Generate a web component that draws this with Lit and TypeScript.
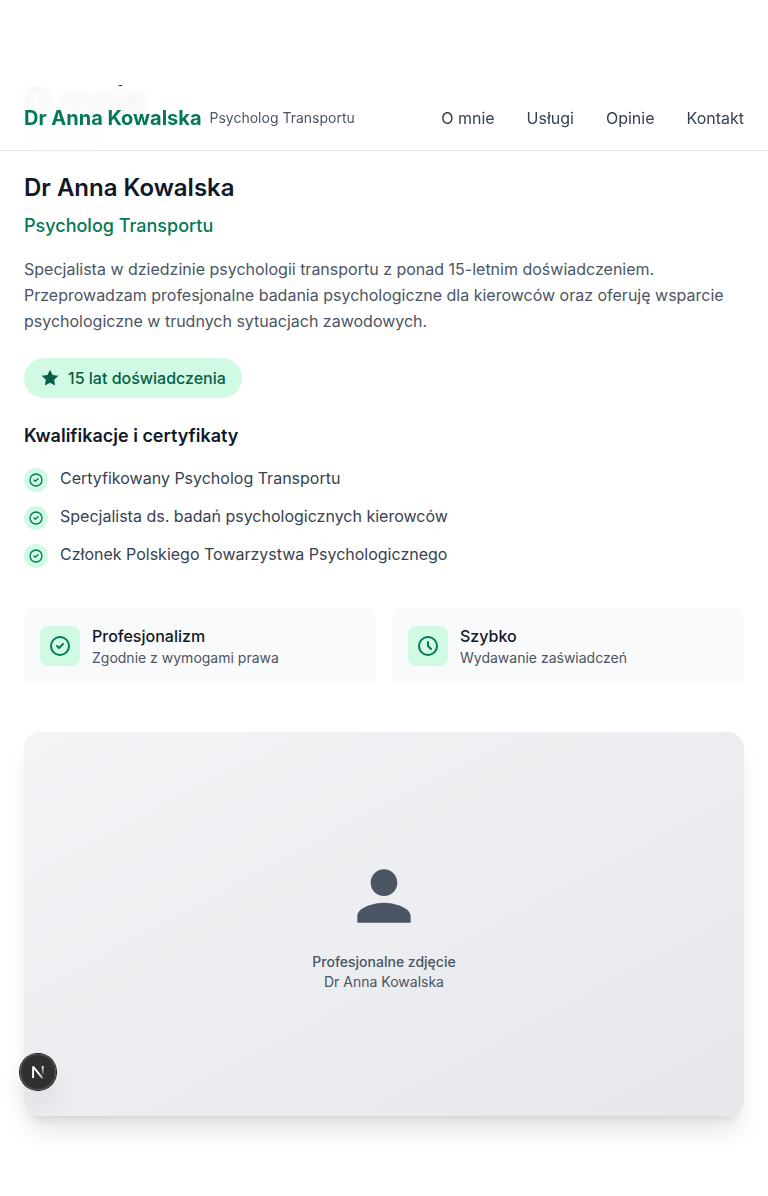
import { LitElement, html, svg, css } from "lit";
import { customElement } from "lit/decorators.js";

const check = svg`<path d="M9 12l2 2 4-4m6 2a9 9 0 11-18 0 9 9 0 0118 0z"/>`;
const clock = svg`<path d="M12 8v4l3 3m6-3a9 9 0 11-18 0 9 9 0 0118 0z"/>`;

const NAV = ["O mnie", "Usługi", "Opinie", "Kontakt"];
const QUALIFICATIONS = [
  "Certyfikowany Psycholog Transportu",
  "Specjalista ds. badań psychologicznych kierowców",
  "Członek Polskiego Towarzystwa Psychologicznego",
];
const FEATURES = [
  { icon: check, title: "Profesjonalizm", text: "Zgodnie z wymogami prawa" },
  { icon: clock, title: "Szybko", text: "Wydawanie zaświadczeń" },
];

@customElement("app-root")
export class AppRoot extends LitElement {
  static styles = css`
    :host {
      display: block;
      position: relative;
      height: 1196px;
      overflow: hidden;
      background: #fff;
      font: 400 16px/24px Inter, sans-serif;
      color: #111827;
    }
    * { box-sizing: border-box; margin: 0; padding: 0; }
    svg { display: block; flex: none; }
    .line { fill: none; stroke: currentColor; stroke-width: 2; stroke-linecap: round; stroke-linejoin: round; }
    header {
      position: absolute;
      top: 86px;
      left: 0;
      right: 0;
      z-index: 2;
      height: 65px;
      padding: 0 24px;
      display: flex;
      align-items: center;
      justify-content: space-between;
      background: rgb(255 255 255 / 0.95);
      backdrop-filter: blur(4px);
      border-bottom: 1px solid #e5e7eb;
    }
    .brand { display: flex; align-items: center; gap: 8px; }
    .name { font-size: 20px; line-height: 28px; font-weight: 700; color: #047857; }
    .role { font-size: 14px; line-height: 20px; color: #4b5563; }
    nav { display: flex; gap: 32px; }
    nav a { color: #374151; }
    main { padding: 80px 24px 0; }
    h2 { font-size: 36px; line-height: 40px; font-weight: 700; color: #111827; }
    .bar { width: 80px; height: 4px; margin: 16px 0 32px; background: #047857; }
    h3 { font-size: 24px; line-height: 32px; font-weight: 600; color: #111827; }
    .sub { margin-top: 8px; font-size: 18px; line-height: 28px; font-weight: 500; color: #047857; }
    .bio { margin-top: 16px; line-height: 26px; color: #4b5563; }
    .badge {
      display: inline-flex;
      align-items: center;
      gap: 8px;
      margin-top: 24px;
      padding: 8px 16px;
      border-radius: 20px;
      background: #d1fae5;
      color: #065f46;
      font-weight: 500;
      vertical-align: top;
    }
    h4 { margin-top: 24px; font-size: 18px; line-height: 28px; font-weight: 600; color: #111827; }
    ul { list-style: none; margin-top: 16px; display: grid; gap: 12px; }
    li { display: flex; align-items: flex-start; gap: 12px; color: #374151; }
    .dot {
      display: grid;
      place-items: center;
      width: 24px;
      height: 24px;
      margin-top: 2px;
      border-radius: 50%;
      background: #d1fae5;
      color: #047857;
    }
    .cards { display: grid; grid-template-columns: 1fr 1fr; gap: 16px; margin-top: 40px; }
    .card {
      display: flex;
      align-items: center;
      gap: 12px;
      padding: 16px;
      border-radius: 8px;
      background: #f9fafb;
    }
    .tile {
      display: grid;
      place-items: center;
      width: 40px;
      height: 40px;
      border-radius: 8px;
      background: #d1fae5;
      color: #047857;
    }
    .title { font-weight: 500; color: #111827; }
    .text { font-size: 14px; line-height: 20px; color: #4b5563; }
    .photo {
      display: flex;
      flex-direction: column;
      align-items: center;
      justify-content: center;
      height: 384px;
      margin-top: 48px;
      border-radius: 16px;
      background: linear-gradient(to bottom right, #f3f4f6, #e5e7eb);
      box-shadow: 0 20px 25px -5px rgb(0 0 0 / 0.1), 0 8px 10px -6px rgb(0 0 0 / 0.1);
      color: #4b5563;
      font-size: 14px;
      line-height: 20px;
    }
    .photo svg { margin-bottom: 16px; }
    .strong { font-weight: 500; }
    .dev {
      position: absolute;
      left: 20px;
      top: 1054px;
      z-index: 3;
      display: grid;
      place-items: center;
      width: 36px;
      height: 36px;
      border-radius: 50%;
      background: rgb(0 0 0 / 0.8);
      box-shadow: 0 0 0 1px #171717, inset 0 0 0 1px hsl(0 0% 100% / 0.14), 0 16px 32px -8px rgb(0 0 0 / 0.24);
    }
  `;

  render() {
    return html`
      <header>
        <div class="brand">
          <span class="name">Dr Anna Kowalska</span>
          <span class="role">Psycholog Transportu</span>
        </div>
        <nav>${NAV.map((n) => html`<a>${n}</a>`)}</nav>
      </header>
      <main>
        <h2>O mnie</h2>
        <div class="bar"></div>
        <h3>Dr Anna Kowalska</h3>
        <p class="sub">Psycholog Transportu</p>
        <p class="bio">
          Specjalista w dziedzinie psychologii transportu z ponad 15-letnim doświadczeniem.
          Przeprowadzam profesjonalne badania psychologiczne dla kierowców oraz oferuję wsparcie
          psychologiczne w trudnych sytuacjach zawodowych.
        </p>
        <div class="badge">
          <svg width="20" height="20" viewBox="0 0 24 24" fill="currentColor">
            <path d="M12 2l3.09 6.26L22 9.27l-5 4.87 1.18 6.88L12 17.77l-6.18 3.25L7 14.14 2 9.27l6.91-1.01L12 2z" />
          </svg>
          <span>15 lat doświadczenia</span>
        </div>
        <h4>Kwalifikacje i certyfikaty</h4>
        <ul>
          ${QUALIFICATIONS.map(
            (q) => html`<li>
              <span class="dot"><svg class="line" width="16" height="16" viewBox="0 0 24 24">${check}</svg></span>
              <span>${q}</span>
            </li>`
          )}
        </ul>
        <div class="cards">
          ${FEATURES.map(
            (f) => html`<div class="card">
              <span class="tile"><svg class="line" width="24" height="24" viewBox="0 0 24 24">${f.icon}</svg></span>
              <div>
                <p class="title">${f.title}</p>
                <p class="text">${f.text}</p>
              </div>
            </div>`
          )}
        </div>
        <div class="photo">
          <svg width="80" height="80" viewBox="0 0 24 24" fill="currentColor">
            <path d="M12 12c2.21 0 4-1.79 4-4s-1.79-4-4-4-4 1.79-4 4 1.79 4 4 4zm0 2c-2.67 0-8 1.34-8 4v2h16v-2c0-2.66-5.33-4-8-4z" />
          </svg>
          <p class="strong">Profesjonalne zdjęcie</p>
          <p>Dr Anna Kowalska</p>
        </div>
      </main>
      <div class="dev">
        <svg width="14" height="14" viewBox="0 0 14 14" fill="none">
          <defs>
            <linearGradient id="diag" x1="8" y1="8.5" x2="12.5" y2="14" gradientUnits="userSpaceOnUse">
              <stop stop-color="#fff" /><stop offset="0.6" stop-color="#fff" stop-opacity="0.7" /><stop offset="1" stop-color="#fff" stop-opacity="0" />
            </linearGradient>
            <linearGradient id="stem" x1="11" y1="1" x2="11" y2="11" gradientUnits="userSpaceOnUse">
              <stop stop-color="#fff" /><stop offset="1" stop-color="#fff" stop-opacity="0" />
            </linearGradient>
          </defs>
          <path d="M2.1 13V1.6L12 13.8" stroke="url(#diag)" stroke-width="1.9" stroke-linejoin="bevel" />
          <path d="M11.7 1V10.5" stroke="url(#stem)" stroke-width="1.8" />
        </svg>
      </div>
    `;
  }
}
